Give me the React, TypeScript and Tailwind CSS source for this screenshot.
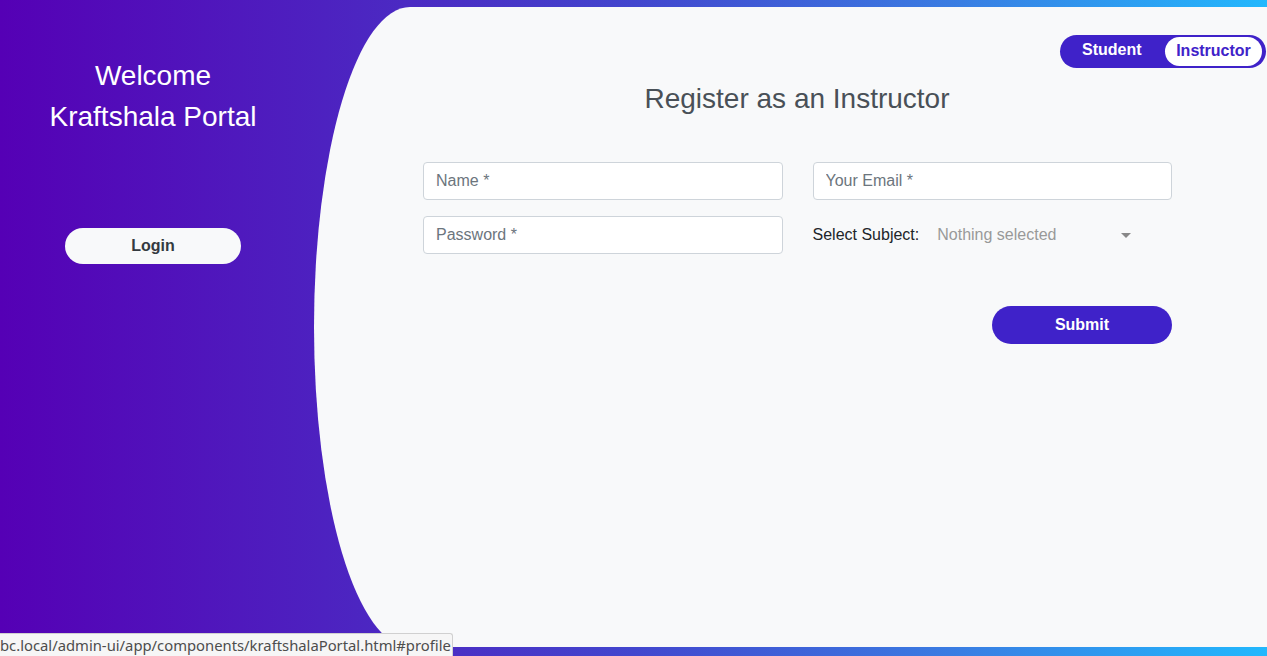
import React from "react";

export default function App() {
  return (
    <div
      className="relative flex h-[656px] w-full overflow-hidden bg-[linear-gradient(to_right,#5500b5_0%,#4a2ec4_35%,#4246ce_50%,#3a7ce2_75%,#22b8fd_100%)]"
      style={{ fontFamily: '"Liberation Sans", Arial, sans-serif' }}
    >
      {/* Left column */}
      <div className="flex w-[314px] shrink-0 flex-col items-center pr-[8px] pt-[55px]">
        <h2 className="text-center text-[28px] leading-[41px] text-white">
          Welcome
          <br />
          Kraftshala Portal
        </h2>
        <button className="mt-[91px] h-[36px] w-[176px] rounded-full bg-[#f8f9fa] text-[16px] font-bold text-[#343a40]">
          Login
        </button>
      </div>

      {/* Right panel */}
      <div className="mt-[7px] flex h-[640px] flex-1 flex-col rounded-tl-[96px_320px] rounded-bl-[96px_320px] bg-[#f8f9fa]">
        <div className="flex justify-end pr-[1px] pt-[28px]">
          <div className="flex h-[33px] w-[206px] items-center rounded-full bg-[#3f22c9] pl-[22px] pr-[4px]">
            <span className="-mt-[4px] text-[16px] font-bold text-white">Student</span>
            <span className="ml-auto flex h-[29px] w-[97px] items-center justify-center rounded-full bg-white pb-[2px] text-[16px] font-bold text-[#3f22c9]">
              Instructor
            </span>
          </div>
        </div>

        <h3 className="mt-[14px] pl-[13px] text-center text-[28px] leading-[34px] text-[#495057]">
          Register as an Instructor
        </h3>

        <div className="ml-[109px] mt-[46px] grid w-[749px] grid-cols-2 gap-x-[30px] gap-y-[16px]">
          <input
            className="h-[38px] rounded-[4px] border border-[#ced4da] bg-white px-[12px] text-[16px] text-[#495057] placeholder:text-[#6c757d] outline-none"
            placeholder="Name *"
          />
          <input
            className="h-[38px] rounded-[4px] border border-[#ced4da] bg-white px-[12px] text-[16px] text-[#495057] placeholder:text-[#6c757d] outline-none"
            placeholder="Your Email *"
          />
          <input
            className="h-[38px] rounded-[4px] border border-[#ced4da] bg-white px-[12px] text-[16px] text-[#495057] placeholder:text-[#6c757d] outline-none"
            placeholder="Password *"
          />
          <div className="flex h-[38px] items-center">
            <span className="text-[16px] text-[#212529]">Select Subject:</span>
            <span className="ml-[18px] text-[16px] text-[#999999]">Nothing selected</span>
            <span className="ml-[65px] h-0 w-0 border-x-[5px] border-t-[5px] border-x-transparent border-t-[#888888]" />
          </div>
        </div>

        <div className="ml-[109px] mt-[52px] flex w-[749px] justify-end">
          <button className="h-[38px] w-[180px] rounded-full bg-[#3f22c9] text-[16px] font-bold text-white">
            Submit
          </button>
        </div>
      </div>

      {/* Status bar overlay */}
      <div
        className="absolute bottom-0 left-0 flex h-[23px] w-[453px] items-center overflow-hidden rounded-tr-[3px] border-r border-t border-[#d0d0d0] bg-[#f6f6f6] text-[14.8px] text-[#4d4d4d]"
        style={{ fontFamily: '"Noto Sans", "DejaVu Sans", sans-serif' }}
      >
        <span className="whitespace-nowrap">bc.local/admin-ui/app/components/kraftshalaPortal.html#profile</span>
      </div>
    </div>
  );
}
